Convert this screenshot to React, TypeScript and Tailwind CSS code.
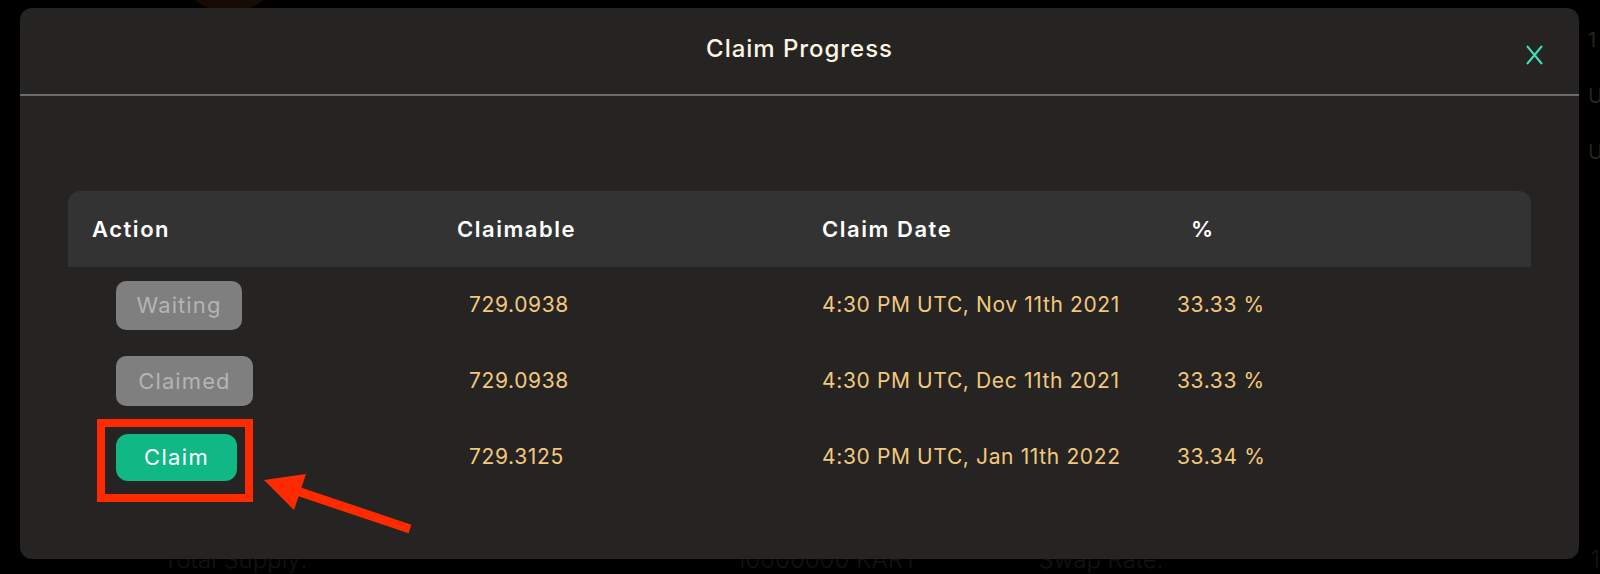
const ROWS = [
  { status: 'Waiting', amount: '729.0938', date: '4:30 PM UTC, Nov 11th 2021', pct: '33.33 %' },
  { status: 'Claimed', amount: '729.0938', date: '4:30 PM UTC, Dec 11th 2021', pct: '33.33 %' },
  { status: 'Claim', amount: '729.3125', date: '4:30 PM UTC, Jan 11th 2022', pct: '33.34 %' },
];

function StatusButton({ status }: { status: string }) {
  if (status === 'Claim') {
    return (
      <button className="flex h-[47px] w-[121px] items-center justify-center rounded-[12px] bg-[#10b886] text-[22px] tracking-[0.06em] text-white">
        Claim
      </button>
    );
  }
  return (
    <button
      className={
        status === 'Waiting'
          ? 'flex h-[49px] w-[126px] items-center justify-center rounded-[10px] bg-[#7f7f7f] text-[22px] tracking-[0.05em] text-[#b4b4b4]'
          : 'flex h-[50px] w-[137px] items-center justify-center rounded-[10px] bg-[#7f7f7f] text-[22px] tracking-[0.05em] text-[#b4b4b4]'
      }
    >
      {status}
    </button>
  );
}

export default function App() {
  return (
    <div className="relative h-[574px] w-[1600px] overflow-hidden bg-black font-['Inter',sans-serif]">
      {/* page behind the overlay */}
      <div className="flex h-full flex-col justify-between">
        <div className="flex h-[8px] items-start">
          <div className="ml-[173px] h-[112px] w-[112px] -translate-y-[100px] rounded-full bg-[#160b05]" />
        </div>
        <div className="flex h-[24px] items-end pl-[163px] text-[24px] font-light leading-[28px] text-[#131313]">
          <span className="w-[574px]">Total Supply:</span>
          <span className="w-[303px]">10000000 KART</span>
          <span className="w-[553px]">Swap Rate:</span>
          <span>1</span>
        </div>
      </div>

      <div className="absolute left-[1588px] top-[26px] flex flex-col gap-[28px] text-[20px] leading-[28px] text-[#2a2418]">
        <span>1</span>
        <span>U</span>
        <span>U</span>
      </div>

      {/* modal */}
      <div className="absolute left-[20px] top-[8px] h-[551px] w-[1559px] rounded-[12px] bg-[#252423]">
        <div className="relative h-[88px] border-b-2 border-[#6b6b6b]">
          <h2 className="pt-[25px] text-center text-[24px] font-medium leading-[32px] tracking-[0.04em] text-[#fff5e4]">
            Claim Progress
          </h2>
          <button className="absolute right-[35px] top-[37px]">
            <svg width="19" height="20" viewBox="0 0 19 20">
              <path d="M2 1 L17 19 M17 1 L2 19" stroke="#3fe0b6" strokeWidth="2" fill="none" />
            </svg>
          </button>
        </div>

        <div className="mx-12 mt-[95px]">
          <div className="grid h-[76px] grid-cols-[389px_365px_369px_1fr] items-center rounded-t-[12px] bg-[#333333] text-[22px] font-semibold tracking-[0.07em] text-white">
            <div className="pl-6">Action</div>
            <div>Claimable</div>
            <div>Claim Date</div>
            <div>%</div>
          </div>
          {ROWS.map((r) => (
            <div
              key={r.date}
              className="grid h-[76px] grid-cols-[389px_365px_369px_1fr] items-center text-[21px] tracking-[0.03em] text-[#f3c87c]"
            >
              <div className="pl-12">
                <StatusButton status={r.status} />
              </div>
              <div className="pl-3">{r.amount}</div>
              <div>{r.date}</div>
              <div className="-ml-[14px]">{r.pct}</div>
            </div>
          ))}
        </div>
      </div>

      {/* annotation */}
      <div className="absolute left-[97px] top-[419px] h-[83px] w-[156px] border-[8px] border-[#ff2a00]" />
      <svg className="absolute left-0 top-0" width="1600" height="574">
        <polygon
          points="264,480 306,474 301.4,487.7 411.4,524.7 408.6,533.3 298.6,496.3 294,510"
          fill="#ff2a00"
        />
      </svg>
    </div>
  );
}
